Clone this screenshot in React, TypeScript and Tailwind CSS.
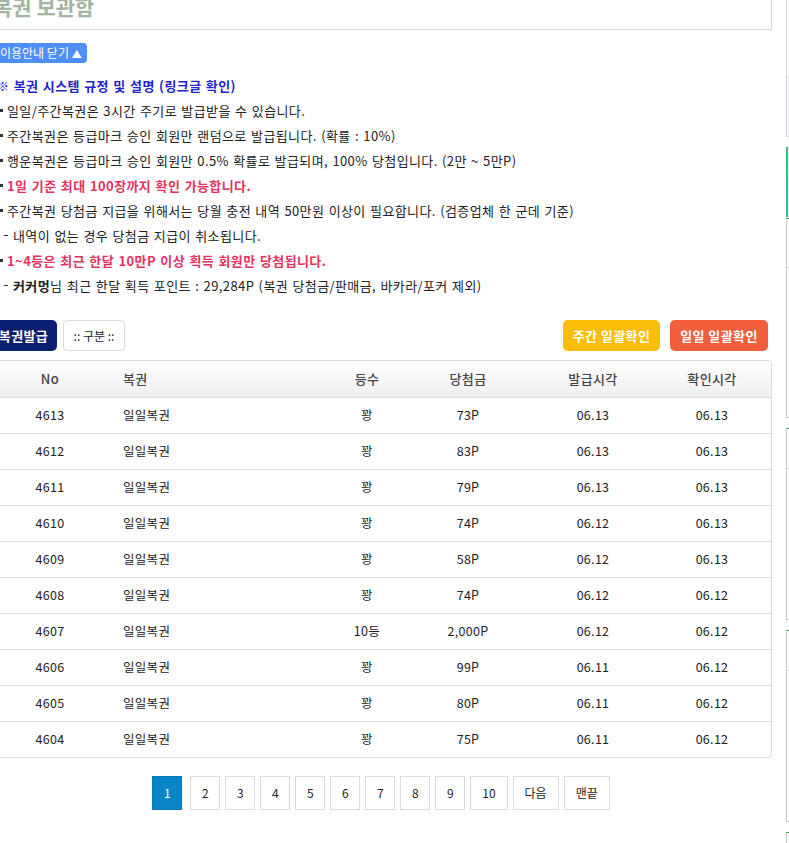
import React from 'react';

const rows = [
  { no: 4613, rank: '꽝', prize: '73P', issued: '06.13', checked: '06.13' },
  { no: 4612, rank: '꽝', prize: '83P', issued: '06.13', checked: '06.13' },
  { no: 4611, rank: '꽝', prize: '79P', issued: '06.13', checked: '06.13' },
  { no: 4610, rank: '꽝', prize: '74P', issued: '06.12', checked: '06.13' },
  { no: 4609, rank: '꽝', prize: '58P', issued: '06.12', checked: '06.13' },
  { no: 4608, rank: '꽝', prize: '74P', issued: '06.12', checked: '06.12' },
  { no: 4607, rank: '10등', prize: '2,000P', issued: '06.12', checked: '06.12' },
  { no: 4606, rank: '꽝', prize: '99P', issued: '06.11', checked: '06.12' },
  { no: 4605, rank: '꽝', prize: '80P', issued: '06.11', checked: '06.12' },
  { no: 4604, rank: '꽝', prize: '75P', issued: '06.11', checked: '06.12' },
];

const pages = ['2', '3', '4', '5', '6', '7', '8', '9', '10', '다음', '맨끝'];

const grid = 'grid grid-cols-[118px_208px_100px_102px_148px_1fr] items-center';

const Bullet = ({ children, className = '' }: { children: React.ReactNode; className?: string }) => (
  <div className={`flex items-center h-[25px] ${className}`}>
    <span className="ml-[10px] w-[3px] h-[3px] bg-[#333] shrink-0" />
    <span className="ml-[4px]">{children}</span>
  </div>
);

const Sub = ({ children }: { children: React.ReactNode }) => (
  <div className="flex items-center h-[25px]">
    <span className="ml-[14px] w-[4px] h-[1px] bg-[#333] shrink-0" />
    <span className="ml-[5px]">{children}</span>
  </div>
);

export default function App() {
  return (
    <div
      className="w-[789px] h-[843px] overflow-hidden bg-white text-[#222]"
      style={{ fontFamily: '"Noto Sans CJK KR", "Noto Sans", sans-serif' }}
    >
      <div className="flex ml-[-10px]">
        {/* Main */}
        <main className="w-[782px] shrink-0">
          {/* Title */}
          <div className="mt-[-22px] h-[52px] border border-[#d5dae3] pl-[2px] pt-[13px]">
            <h1 className="text-[21px] leading-[28px] font-bold text-[#a3b4a0]">복권 보관함</h1>
          </div>

          <button className="mt-[13px] h-[20px] pl-[10px] pr-[5px] rounded-[4px] bg-[#4d8ef8] text-white text-[12px] leading-[20px]">
            이용안내 닫기 <span className="text-[10px]">▲</span>
          </button>

          {/* Guide */}
          <div className="mt-[10px] text-[13px] tracking-[0.4px] [word-spacing:1px]">
            <div className="flex items-center h-[25px] font-bold text-[#2323cf]">
              <span className="ml-[6px]">※ 복권 시스템 규정 및 설명 (링크글 확인)</span>
            </div>
            <Bullet>일일/주간복권은 3시간 주기로 발급받을 수 있습니다.</Bullet>
            <Bullet>주간복권은 등급마크 승인 회원만 랜덤으로 발급됩니다. (확률 : 10%)</Bullet>
            <Bullet>행운복권은 등급마크 승인 회원만 0.5% 확률로 발급되며, 100% 당첨입니다. (2만 ~ 5만P)</Bullet>
            <Bullet className="font-bold text-[#e5335f]">1일 기준 최대 100장까지 확인 가능합니다.</Bullet>
            <Bullet>주간복권 당첨금 지급을 위해서는 당월 충전 내역 50만원 이상이 필요합니다. (검증업체 한 군데 기준)</Bullet>
            <Sub>내역이 없는 경우 당첨금 지급이 취소됩니다.</Sub>
            <Bullet className="font-bold text-[#e5335f]">1~4등은 최근 한달 10만P 이상 획득 회원만 당첨됩니다.</Bullet>
            <Sub>
              <b>커커멍</b>님 최근 한달 획득 포인트 : 29,284P (복권 당첨금/판매금, 바카라/포커 제외)
            </Sub>
          </div>

          {/* Actions */}
          <div className="mt-[22px] flex items-center h-[31px]">
            <button className="h-[31px] w-[67px] rounded-[5px] bg-[#0b2070] text-white text-[13px] font-bold tracking-[0.4px]">
              복권발급
            </button>
            <button className="ml-[6px] h-[31px] w-[62px] rounded-[4px] border border-[#dcdcdc] bg-white text-[12px]">
              :: 구분 ::
            </button>
            <div className="ml-auto mr-[4px] flex gap-[10px]">
              <button className="h-[31px] w-[97px] rounded-[5px] bg-[#fbbd08] text-white text-[13px] font-bold tracking-[0.4px]">
                주간 일괄확인
              </button>
              <button className="h-[31px] w-[98px] rounded-[5px] bg-[#f15e3b] text-white text-[13px] font-bold tracking-[0.4px]">
                일일 일괄확인
              </button>
            </div>
          </div>

          {/* Table */}
          <div className="mt-[9px] border border-[#dddddd] rounded-[4px] overflow-hidden">
            <div className={`${grid} h-[36px] bg-gradient-to-b from-white to-[#efefef] text-[13px] font-medium text-[#444] tracking-[0.4px]`}>
              <div className="text-center">No</div>
              <div className="pl-[14px]">복권</div>
              <div className="text-center">등수</div>
              <div className="text-center">당첨금</div>
              <div className="text-center">발급시각</div>
              <div className="text-center pr-[14px]">확인시각</div>
            </div>
            {rows.map((r) => (
              <div key={r.no} className={`${grid} h-[36px] border-t border-[#dddddd] text-[12.5px] tracking-[0.3px]`}>
                <div className="text-center">{r.no}</div>
                <div className="pl-[14px]">일일복권</div>
                <div className="text-center">{r.rank}</div>
                <div className="text-center">{r.prize}</div>
                <div className="text-center">{r.issued}</div>
                <div className="text-center pr-[14px]">{r.checked}</div>
              </div>
            ))}
          </div>

          {/* Pagination */}
          <div className="mt-[18px] flex justify-center gap-[5px] text-[12px]">
            <span className="mr-[3px] h-[34px] w-[30px] flex items-center justify-center border border-[#0a76b3] bg-[#0885c7] text-white">
              1
            </span>
            {pages.map((p) => (
              <span
                key={p}
                className={`h-[34px] flex items-center justify-center border border-[#dcdcdc] bg-white ${
                  p.length === 1 ? 'w-[30px]' : 'px-[11px]'
                }`}
              >
                {p}
              </span>
            ))}
          </div>
        </main>

        {/* Sidebar (clipped) */}
        <aside className="ml-[14px] w-[220px] shrink-0">
          <div className="mt-[-20px] h-[157px] border border-[#d8dce6] flex flex-col">
            <div className="h-[95px]" />
            <div className="flex-1 bg-[#f4f5f8] border-t border-[#e6e8ee]" />
          </div>
          <div className="mt-[10px] h-[70px] border-l-2 border-[#3dbd83] bg-gradient-to-b from-[#e9eff8] to-white" />
          <div className="mt-[1px] h-[200px] border border-[#c8c8c8] border-t-[#1a9a4a]">
            <div className="h-[49px] border-b border-[#e4e4e4]" />
          </div>
          <div className="mt-[10px] h-[192px] border border-[#c8c8c8] border-t-[#1a9a4a]">
            <div className="h-[40px] border-b border-[#e4e4e4]" />
          </div>
          <div className="mt-[10px] h-[192px] border border-[#c8c8c8] border-t-[#1a9a4a]">
            <div className="h-[40px] border-b border-[#e4e4e4]" />
          </div>
          <div className="mt-[10px] h-[100px] border border-[#c8c8c8] border-t-[#1a9a4a]" />
        </aside>
      </div>
    </div>
  );
}
